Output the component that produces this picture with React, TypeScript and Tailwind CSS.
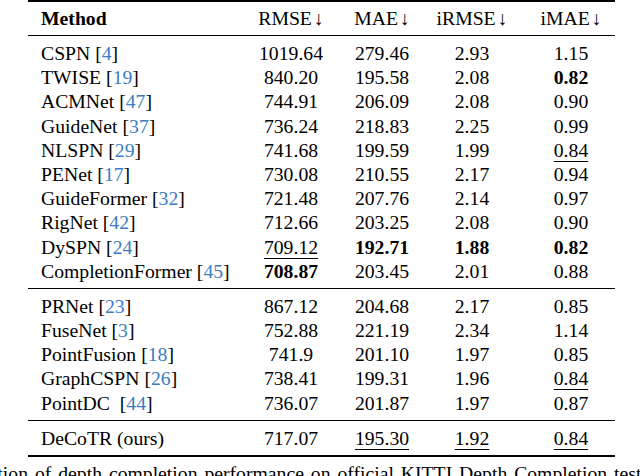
import { Fragment } from 'react'

type Cell = { v: string; b?: boolean; u?: boolean }
type Row = { name: string; cite?: string; gap?: boolean; cells: Cell[] }

const c = (v: string, b = false, u = false): Cell => ({ v, b, u })

const groupA: Row[] = [
  { name: 'CSPN', cite: '4', cells: [c('1019.64'), c('279.46'), c('2.93'), c('1.15')] },
  { name: 'TWISE', cite: '19', cells: [c('840.20'), c('195.58'), c('2.08'), c('0.82', true)] },
  { name: 'ACMNet', cite: '47', cells: [c('744.91'), c('206.09'), c('2.08'), c('0.90')] },
  { name: 'GuideNet', cite: '37', cells: [c('736.24'), c('218.83'), c('2.25'), c('0.99')] },
  { name: 'NLSPN', cite: '29', cells: [c('741.68'), c('199.59'), c('1.99'), c('0.84', false, true)] },
  { name: 'PENet', cite: '17', cells: [c('730.08'), c('210.55'), c('2.17'), c('0.94')] },
  { name: 'GuideFormer', cite: '32', cells: [c('721.48'), c('207.76'), c('2.14'), c('0.97')] },
  { name: 'RigNet', cite: '42', cells: [c('712.66'), c('203.25'), c('2.08'), c('0.90')] },
  { name: 'DySPN', cite: '24', cells: [c('709.12', false, true), c('192.71', true), c('1.88', true), c('0.82', true)] },
  { name: 'CompletionFormer', cite: '45', cells: [c('708.87', true), c('203.45'), c('2.01'), c('0.88')] },
]

const groupB: Row[] = [
  { name: 'PRNet', cite: '23', cells: [c('867.12'), c('204.68'), c('2.17'), c('0.85')] },
  { name: 'FuseNet', cite: '3', cells: [c('752.88'), c('221.19'), c('2.34'), c('1.14')] },
  { name: 'PointFusion', cite: '18', cells: [c('741.9'), c('201.10'), c('1.97'), c('0.85')] },
  { name: 'GraphCSPN', cite: '26', cells: [c('738.41'), c('199.31'), c('1.96'), c('0.84', false, true)] },
  { name: 'PointDC', cite: '44', gap: true, cells: [c('736.07'), c('201.87'), c('1.97'), c('0.87')] },
]

const ours: Row = {
  name: 'DeCoTR (ours)',
  cells: [c('717.07'), c('195.30', false, true), c('1.92', false, true), c('0.84', false, true)],
}

const cols = 'grid grid-cols-[218px_90px_92px_88px_99px]'

function Value({ cell, last }: { cell: Cell; last?: boolean }) {
  return (
    <div className={last ? 'text-center pl-[11px]' : 'text-center'}>
      <span
        className={
          (cell.b ? 'font-bold ' : '') +
          (cell.u ? 'underline decoration-1 underline-offset-[4px]' : '')
        }
      >
        {cell.v}
      </span>
    </div>
  )
}

function TableRow({ row }: { row: Row }) {
  return (
    <div className={cols + ' h-[24.2px] items-center'}>
      <div className="pl-[13px] whitespace-nowrap">
        {row.name}
        {row.cite && (
          <>
            {row.gap ? '\u00a0 ' : ' '}[<span className="text-[#3b7dc1]">{row.cite}</span>]
          </>
        )}
      </div>
      {row.cells.map((cell, i) => (
        <Value key={i} cell={cell} last={i === 3} />
      ))}
    </div>
  )
}

export default function App() {
  const heads = ['RMSE', 'MAE', 'iRMSE', 'iMAE']
  return (
    <div className="w-[640px] h-[476px] overflow-hidden bg-white text-black text-[19.7px] leading-[24.2px] font-['Liberation_Serif','Times_New_Roman',serif]">
      <div className="ml-[28px] w-[587px]">
        <div className="h-[2px] bg-black" />
        <div className={cols + ' h-[33px] items-center'}>
          <div className="pl-[13px] font-bold">Method</div>
          {heads.map((h, i) => (
            <Fragment key={h}>
              <div className={i === 3 ? 'text-center pl-[11px]' : 'text-center'}>
                {h}
                <span className="ml-[2px]">↓</span>
              </div>
            </Fragment>
          ))}
        </div>
        <div className="h-px bg-black" />
        <div className="py-[5px]">
          {groupA.map((r) => (
            <TableRow key={r.name} row={r} />
          ))}
        </div>
        <div className="h-px bg-black" />
        <div className="py-[5px]">
          {groupB.map((r) => (
            <TableRow key={r.name} row={r} />
          ))}
        </div>
        <div className="h-px bg-black" />
        <div className="py-[5px]">
          <TableRow row={ours} />
        </div>
        <div className="h-[2px] bg-black" />
      </div>
      <div className="mt-[4px] whitespace-nowrap ml-[-54px] [word-spacing:2px]">
        evaluation of depth completion performance on official KITTI Depth Completion test set.
      </div>
    </div>
  )
}
